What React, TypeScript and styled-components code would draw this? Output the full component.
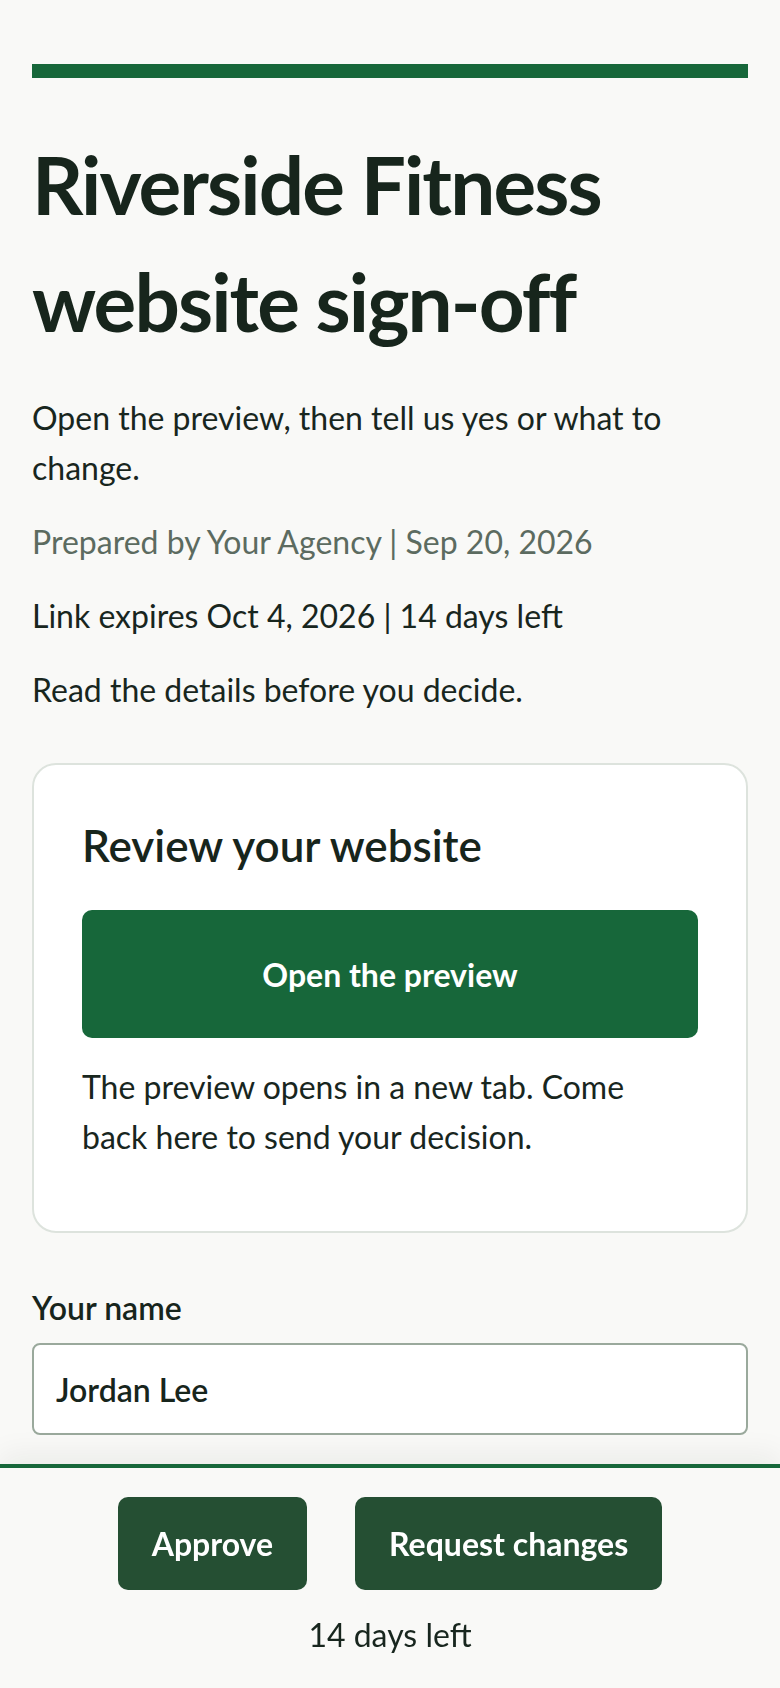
import React from "react";
import styled, { createGlobalStyle } from "styled-components";

const GlobalStyle = createGlobalStyle`
  *, *::before, *::after { box-sizing: border-box; }
  html, body {
    margin: 0;
    padding: 0;
    background: #f9f9f7;
  }
  body {
    font-family: Lato, "Open Sans", "Noto Sans", sans-serif;
    color: #18261e;
    -webkit-font-smoothing: antialiased;
  }
`;

const Page = styled.main`
  display: flex;
  flex-direction: column;
  padding: 64px 32px 260px;
`;

const AccentBar = styled.div`
  height: 14px;
  background: #17673a;
`;

const Title = styled.h1`
  margin: 48px 0 0;
  font-size: 80px;
  line-height: 117px;
  font-weight: 700;
  letter-spacing: -1.9px;
  color: #17251c;
`;

const Lead = styled.p`
  margin: 33px 0 0;
  font-size: 32px;
  line-height: 50px;
  color: #18261e;
`;

const Meta = styled.p<{ $muted?: boolean }>`
  margin: 24px 0 0;
  font-size: 32px;
  line-height: 50px;
  color: ${(p) => (p.$muted ? "#5c6b60" : "#18261e")};
`;

const Card = styled.section`
  margin-top: 48px;
  display: flex;
  flex-direction: column;
  background: #ffffff;
  border: 2px solid #dde3dd;
  border-radius: 24px;
  padding: 52px 48px 69px;
`;

const CardTitle = styled.h2`
  margin: 0;
  font-size: 44px;
  line-height: 56px;
  font-weight: 600;
  color: #17251c;
`;

const PreviewButton = styled.button`
  margin-top: 37px;
  height: 128px;
  display: flex;
  align-items: center;
  justify-content: center;
  border: none;
  border-radius: 10px;
  background: #17673a;
  color: #ffffff;
  font-family: inherit;
  font-size: 32px;
  font-weight: 700;
  cursor: pointer;
`;

const CardNote = styled.p`
  margin: 24px 0 0;
  max-width: 600px;
  font-size: 32px;
  line-height: 50px;
  color: #18261e;
`;

const Field = styled.label`
  margin-top: 50px;
  display: flex;
  flex-direction: column;
  gap: 10px;
`;

const FieldLabel = styled.span`
  font-size: 32px;
  line-height: 50px;
  font-weight: 600;
  color: #17251c;
`;

const TextInput = styled.input`
  height: 92px;
  width: 100%;
  padding: 0 22px;
  background: #ffffff;
  border: 2px solid #9aa99c;
  border-radius: 8px;
  font-family: inherit;
  font-size: 32px;
  font-weight: 600;
  color: #17251c;
  outline: none;
`;

const Footer = styled.footer`
  position: fixed;
  left: 0;
  right: 0;
  bottom: 0;
  display: flex;
  flex-direction: column;
  align-items: center;
  padding: 29px 32px 28px;
  background: #f9f9f7;
  border-top: 4px solid #17673a;
  box-shadow: 0 -10px 28px rgba(20, 40, 25, 0.06);
`;

const Actions = styled.div`
  display: flex;
  justify-content: center;
  gap: 48px;
`;

const ActionButton = styled.button`
  padding: 21px 34px;
  line-height: 51px;
  border: none;
  border-radius: 10px;
  background: #254f33;
  color: #ffffff;
  font-family: inherit;
  font-size: 32px;
  font-weight: 700;
  cursor: pointer;
`;

const Countdown = styled.p`
  margin: 20px 0 0;
  font-size: 32px;
  line-height: 50px;
  color: #18261e;
`;

export default function App() {
  return (
    <>
      <GlobalStyle />
      <Page>
        <AccentBar />
        <Title>Riverside Fitness website sign-off</Title>
        <Lead>Open the preview, then tell us yes or what to change.</Lead>
        <Meta $muted>Prepared by Your Agency | Sep 20, 2026</Meta>
        <Meta>Link expires Oct 4, 2026 | 14 days left</Meta>
        <Meta>Read the details before you decide.</Meta>
        <Card>
          <CardTitle>Review your website</CardTitle>
          <PreviewButton type="button">Open the preview</PreviewButton>
          <CardNote>
            The preview opens in a new tab. Come back here to send your decision.
          </CardNote>
        </Card>
        <Field>
          <FieldLabel>Your name</FieldLabel>
          <TextInput type="text" defaultValue="Jordan Lee" />
        </Field>
      </Page>
      <Footer>
        <Actions>
          <ActionButton type="button">Approve</ActionButton>
          <ActionButton type="button">Request changes</ActionButton>
        </Actions>
        <Countdown>14 days left</Countdown>
      </Footer>
    </>
  );
}
